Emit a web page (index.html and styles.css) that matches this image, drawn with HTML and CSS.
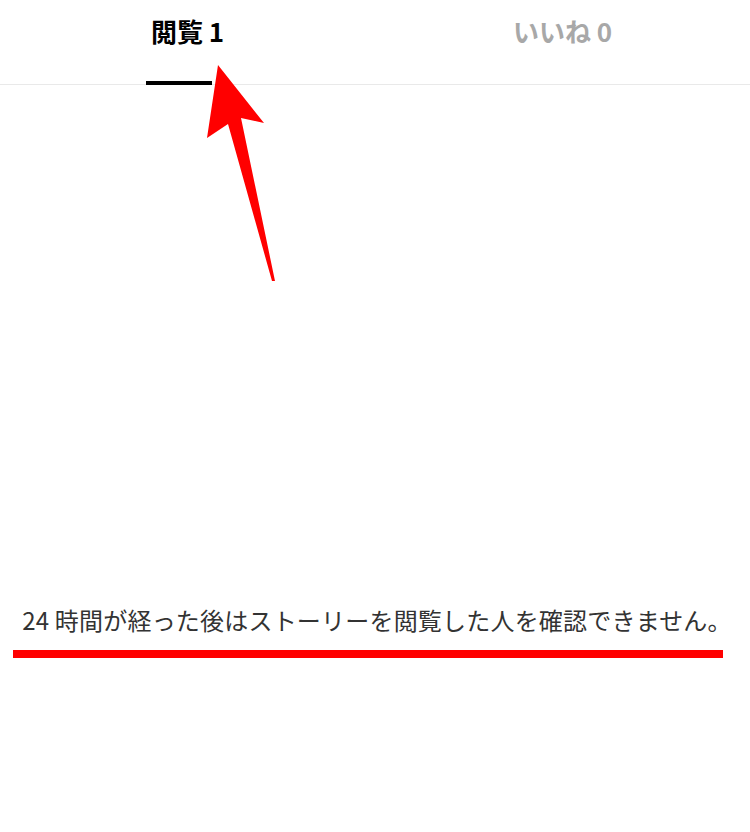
FILE: index.html
```html
<!DOCTYPE html>
<html lang="ja">
<head>
  <meta charset="UTF-8" />
  <meta name="viewport" content="width=device-width, initial-scale=1.0" />
  <title>閲覧</title>
  <link rel="stylesheet" href="styles.css">
</head>
<body>
  <nav class="tabs">
    <a href="#" class="tab active"><span>閲覧 1</span></a>
    <a href="#" class="tab"><span>いいね 0</span></a>
  </nav>

  <main class="viewers">
    <p class="notice">24 時間が経った後はストーリーを閲覧した人を確認できません。</p>
    <div class="highlight"></div>
  </main>

  <svg class="pointer" width="750" height="300" viewBox="0 0 750 300">
    <polygon points="218,65 264,123 241,118 275,281 272,281 228,124 207,138" fill="#ff0000" />
  </svg>
</body>
</html>
```

FILE: styles.css
```css
:root {
  --text: #262626;
  --muted: #a8a8a8;
  --line: #e9e9e9;
  --mark: #ff0000;
}

body {
  margin: 0;
  background: #fff;
  color: var(--text);
  font-family: "Noto Sans CJK JP", "Noto Sans", sans-serif;
  position: relative;
}

.tabs {
  display: flex;
  height: 84px;
  border-bottom: 1px solid var(--line);
}

.tab {
  flex: 1;
  display: flex;
  flex-direction: column;
  align-items: center;
  text-decoration: none;
  color: var(--muted);
  font-size: 26px;
  font-weight: 700;
  line-height: 36px;
  padding-top: 13px;
  position: relative;
}

.tab.active {
  color: #000;
}

.tab.active::after {
  content: "";
  position: absolute;
  left: 146px;
  bottom: -1px;
  width: 66px;
  height: 4px;
  background: #000;
}

.viewers {
  padding-top: 520px;
}

.notice {
  margin: 0;
  text-align: center;
  font-size: 24px;
  letter-spacing: 0.2px;
  line-height: 30px;
  color: #333;
  padding-left: 4px;
}

.highlight {
  margin: 15px 0 0 13px;
  width: 710px;
  height: 8px;
  background: var(--mark);
}

.pointer {
  position: absolute;
  top: 0;
  left: 0;
}
```
